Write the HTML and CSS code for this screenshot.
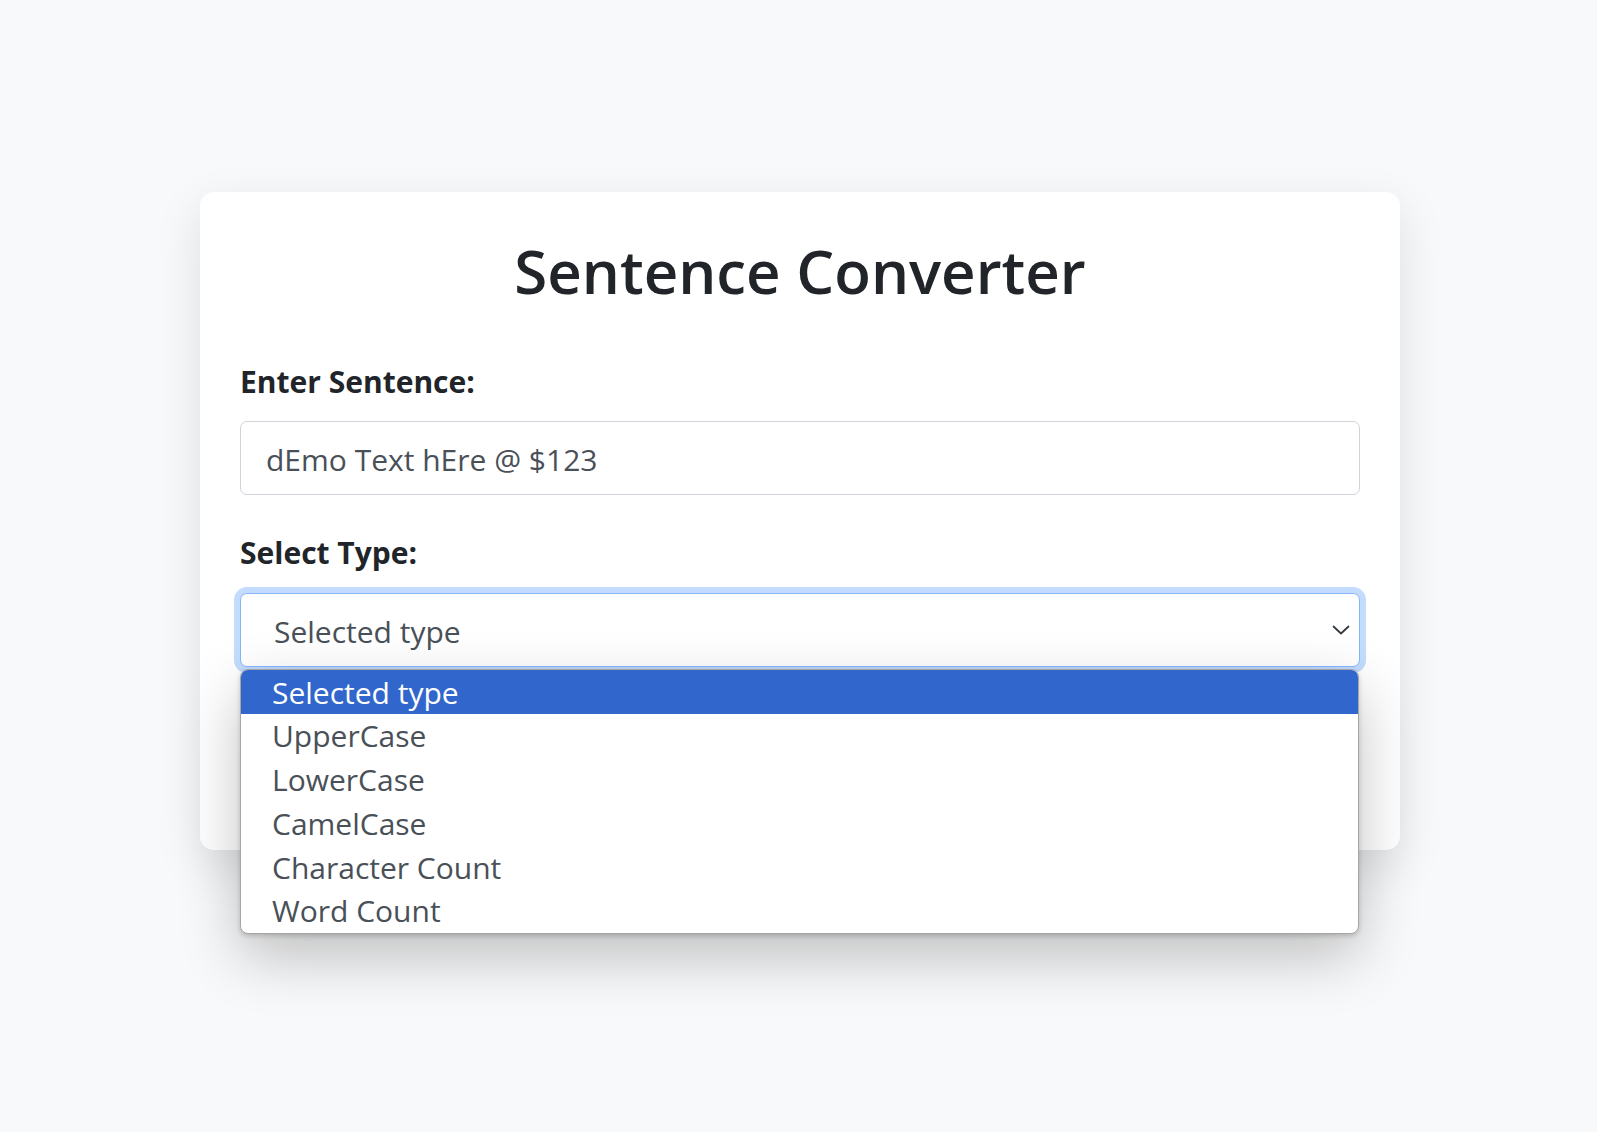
FILE: index.html
```html
<!DOCTYPE html>
<html lang="en">
<head>
<meta charset="utf-8">
<title>Sentence Converter</title>
<link rel="stylesheet" href="styles.css">
</head>
<body>
<main class="page">
  <section class="card">
    <h1 class="title">Sentence Converter</h1>
    <label class="field-label" for="sentence">Enter Sentence:</label>
    <input class="text-input" id="sentence" type="text" value="dEmo Text hEre @ $123">
    <label class="field-label" for="type">Select Type:</label>
    <div class="select-wrap">
      <div class="select-box" id="type" role="combobox" aria-expanded="true">
        <span class="select-value">Selected type</span>
        <svg class="chevron" width="18" height="10" viewBox="0 0 18 10" aria-hidden="true">
          <polyline points="1.5,1.5 9,8.5 16.5,1.5" fill="none" stroke="#343a40" stroke-width="1.8" stroke-linecap="round" stroke-linejoin="round"/>
        </svg>
      </div>
      <ul class="options" role="listbox">
        <li class="option option-active">Selected type</li>
        <li class="option">UpperCase</li>
        <li class="option">LowerCase</li>
        <li class="option">CamelCase</li>
        <li class="option">Character Count</li>
        <li class="option">Word Count</li>
      </ul>
    </div>
    <div class="result" aria-live="polite"></div>
  </section>
</main>
</body>
</html>
```
FILE: styles.css
```css
* {
  box-sizing: border-box;
}

html, body {
  margin: 0;
  padding: 0;
}

body {
  background: #f8f9fa;
  font-family: "Open Sans", "Noto Sans", "Liberation Sans", sans-serif;
  color: #212529;
  min-height: 1132px;
}

.page {
  padding-top: 192px;
  display: flex;
  justify-content: center;
  padding-left: 3px;
}

.card {
  width: 1200px;
  background: #ffffff;
  border-radius: 14px;
  box-shadow: 0 16px 48px rgba(0, 0, 0, 0.11);
  padding: 43px 40px 40px;
  display: flex;
  flex-direction: column;
}

.title {
  margin: 0 0 51px;
  font-size: 60px;
  line-height: 73px;
  font-weight: 600;
  text-align: center;
  color: #212529;
}

.field-label {
  display: block;
  font-size: 30px;
  line-height: 45px;
  font-weight: 700;
  color: #212529;
  margin-bottom: 17px;
}

.text-input {
  display: block;
  width: 100%;
  height: 74px;
  margin: 0 0 35px;
  padding: 15px 25px 12px;
  font-family: "Open Sans", "Noto Sans", "Liberation Sans", sans-serif;
  font-size: 30px;
  line-height: 45px;
  color: #495057;
  background: #fff;
  border: 1px solid #ced4da;
  border-radius: 7px;
  outline: none;
}

.select-wrap {
  position: relative;
  margin-top: 1px;
}

.select-box {
  display: flex;
  align-items: center;
  justify-content: space-between;
  height: 74px;
  padding: 15px 9px 13px 33px;
  font-size: 30px;
  line-height: 45px;
  color: #495057;
  background: #fff;
  border: 1px solid #86b7fe;
  border-radius: 7px;
  box-shadow: 0 0 0 6px rgba(13, 110, 253, 0.25);
}

.chevron {
  display: block;
  margin-top: -3px;
}

.options {
  position: absolute;
  top: 76px;
  left: 0;
  right: 1px;
  margin: 0;
  padding: 0;
  list-style: none;
  background: #fff;
  border: 1px solid #a6a6a6;
  border-radius: 8px;
  overflow: hidden;
  box-shadow: 0 2px 5px rgba(0, 0, 0, 0.18), 0 22px 60px rgba(0, 0, 0, 0.24);
  z-index: 10;
}

.option {
  height: 43.8px;
  padding: 2.5px 0 0 31px;
  font-size: 30px;
  line-height: 40px;
  color: #495057;
  white-space: nowrap;
}

.option-active {
  background: #3166cc;
  color: #fff;
}

.result {
  min-height: 143px;
}
```
